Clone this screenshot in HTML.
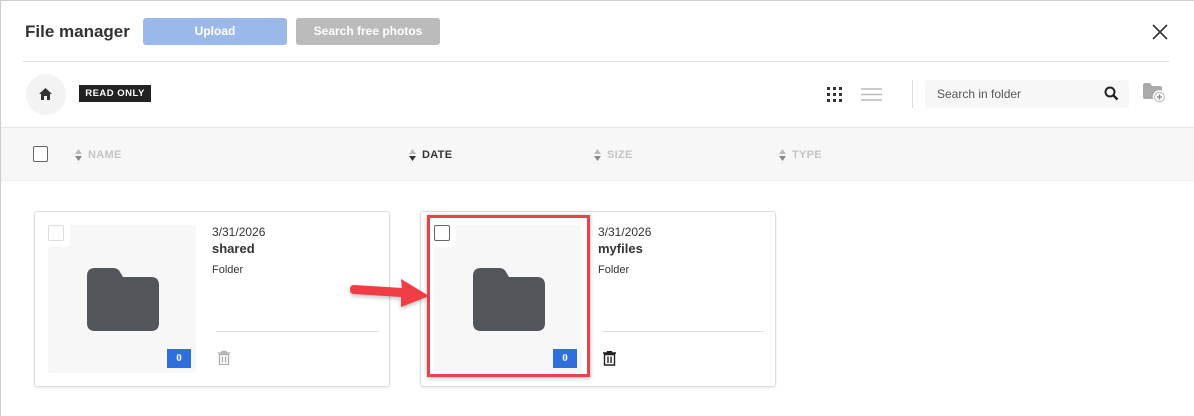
<!DOCTYPE html>
<html><head><style>
*{box-sizing:border-box;margin:0;padding:0}
body{width:1194px;height:416px;background:#fff;font-family:"Liberation Sans",sans-serif;position:relative;overflow:hidden}
.a{position:absolute}
.frame{left:0;top:0;width:1194px;height:416px;border:1px solid #ccc;border-right:none;border-bottom:none}
.btn{height:27px;top:18px;border-radius:3px;color:#fff;font-weight:bold;font-size:12px;text-align:center;line-height:27px}
.hd{font-size:11px;font-weight:bold;color:#c4c4c4;letter-spacing:.3px;top:149px}
.sort{top:148px;width:7px;height:14px}
.card{border:1px solid #ddd;border-radius:3px;background:#fff;width:356px;height:176px;top:211px;box-shadow:0 1px 2px rgba(0,0,0,.08)}
.thumb{left:13px;top:13px;width:148px;height:148px;background:#f7f7f7;border-radius:3px}
.cb{width:16px;height:16px;border:1px solid #999;border-radius:2px;background:#fff}
.badge{width:24px;height:19px;background:#2f6fdc;color:#fff;font-size:11px;font-weight:bold;text-align:center;line-height:19px;font-family:"Liberation Serif",serif}
.txt{font-size:12px;color:#333}
</style></head><body>
<div class="a frame"></div>
<div class="a" style="left:25px;top:22px;font-size:17px;font-weight:bold;color:#333">File manager</div>
<div class="a btn" style="left:143px;width:144px;background:#9ab8ea">Upload</div>
<div class="a btn" style="left:296px;width:144px;background:#bbb">Search free photos</div>
<svg class="a" style="left:1152px;top:24px" width="16" height="16"><path d="M1 1L15 15M15 1L1 15" stroke="#333" stroke-width="1.6"/></svg>
<div class="a" style="left:23px;top:61px;width:1146px;height:1px;background:#ddd"></div>
<div class="a" style="left:26px;top:74px;width:40px;height:41px;border-radius:50%;background:#f3f3f3"></div>
<svg class="a" style="left:39px;top:88px" width="13" height="12"><path d="M6.5 0L13 6H11V12H8V8H5V12H2V6H0Z" fill="#333"/></svg>
<div class="a" style="left:79px;top:85px;width:72px;height:17px;background:#222;color:#fff;font-size:9.5px;font-weight:bold;letter-spacing:.5px;text-align:center;line-height:17px">READ ONLY</div>
<svg class="a" style="left:827px;top:87px" width="18" height="16"><g fill="#333"><rect x="0" y="0" width="3" height="3"/><rect x="6" y="0" width="3" height="3"/><rect x="12" y="0" width="3" height="3"/><rect x="0" y="6" width="3" height="3"/><rect x="6" y="6" width="3" height="3"/><rect x="12" y="6" width="3" height="3"/><rect x="0" y="12" width="3" height="3"/><rect x="6" y="12" width="3" height="3"/><rect x="12" y="12" width="3" height="3"/></g></svg>
<svg class="a" style="left:861px;top:88px" width="21" height="14"><g stroke="#bbb" stroke-width="1.5"><path d="M0 1H21M0 6.5H21M0 12H21"/></g></svg>
<div class="a" style="left:912px;top:80px;width:1px;height:28px;background:#ddd"></div>
<div class="a" style="left:925px;top:80px;width:204px;height:28px;background:#f7f7f7;border-radius:3px"></div>
<div class="a" style="left:937px;top:87px;font-size:12px;color:#555">Search in folder</div>
<svg class="a" style="left:1104px;top:86px" width="15" height="15"><circle cx="6" cy="6" r="4.5" stroke="#222" stroke-width="2" fill="none"/><path d="M9.5 9.5L13.5 13.5" stroke="#222" stroke-width="2.4"/></svg>
<svg class="a" style="left:1143px;top:83px" width="25" height="22"><path d="M0 2Q0 0 2 0H7L9 3H17Q19 3 19 5V16H2Q0 16 0 14Z" fill="#aaa"/><circle cx="16.5" cy="14" r="6" fill="#aaa" stroke="#fff" stroke-width="1.5"/><circle cx="16.5" cy="14" r="4.5" fill="#f7f7f7"/><path d="M16.5 11.5V16.5M14 14H19" stroke="#888" stroke-width="1.2"/></svg>
<div class="a" style="left:1px;top:127px;width:1193px;height:54px;background:#f7f7f7;border-top:1px solid #e6e6e6;border-bottom:1px solid #eee"></div>
<div class="a cb" style="left:33px;top:146px;width:15px;height:16px;border-color:#666"></div>
<svg class="a sort" style="left:75px"><path d="M0 6L3.5 1L7 6Z" fill="#bbb"/><path d="M0 8L3.5 13L7 8Z" fill="#888"/></svg>
<div class="a hd" style="left:88px">NAME</div>
<svg class="a sort" style="left:409px"><path d="M0 6L3.5 1L7 6Z" fill="#bbb"/><path d="M0 8L3.5 13L7 8Z" fill="#333"/></svg>
<div class="a hd" style="left:422px;color:#333">DATE</div>
<svg class="a sort" style="left:594px"><path d="M0 6L3.5 1L7 6Z" fill="#bbb"/><path d="M0 8L3.5 13L7 8Z" fill="#888"/></svg>
<div class="a hd" style="left:607px">SIZE</div>
<svg class="a sort" style="left:779px"><path d="M0 6L3.5 1L7 6Z" fill="#bbb"/><path d="M0 8L3.5 13L7 8Z" fill="#888"/></svg>
<div class="a hd" style="left:792px">TYPE</div>

<div class="a card" style="left:34px">
 <div class="a thumb"></div>
 <div class="a" style="left:13px;top:13px;width:22px;height:22px;background:#fff;border-radius:0 0 4px 0"></div>
 <div class="a cb" style="left:13px;top:13px;border-color:#ddd"></div>
 <svg class="a" style="left:52px;top:56px" width="72" height="63"><path d="M0 8Q0 0 8 0H26Q31 0 33 4L36 9H64Q72 9 72 17V55Q72 63 64 63H8Q0 63 0 55Z" fill="#525559"/></svg>
 <div class="a badge" style="left:132px;top:137px">0</div>
 <div class="a txt" style="left:177px;top:13px">3/31/2026</div>
 <div class="a txt" style="left:177px;top:29px;font-weight:bold;font-size:13px">shared</div>
 <div class="a txt" style="left:177px;top:52px;font-size:11px">Folder</div>
 <div class="a" style="left:181px;top:119px;width:162px;height:1px;background:#ddd"></div>
 <svg class="a" style="left:183px;top:139px" width="12" height="14"><path d="M0 2H12M4 2V0.5H8V2M1.5 3.5H10.5V13.5H1.5Z M4.5 5.5V11.5M7.5 5.5V11.5" stroke="#aaa" stroke-width="1.3" fill="none"/></svg>
</div>

<div class="a card" style="left:420px">
 <div class="a thumb"></div>
 <div class="a" style="left:13px;top:13px;width:22px;height:22px;background:#fff;border-radius:0 0 4px 0"></div>
 <div class="a cb" style="left:13px;top:13px;border-color:#666"></div>
 <svg class="a" style="left:52px;top:56px" width="72" height="63"><path d="M0 8Q0 0 8 0H26Q31 0 33 4L36 9H64Q72 9 72 17V55Q72 63 64 63H8Q0 63 0 55Z" fill="#525559"/></svg>
 <div class="a badge" style="left:132px;top:137px">0</div>
 <div class="a txt" style="left:177px;top:13px">3/31/2026</div>
 <div class="a txt" style="left:177px;top:29px;font-weight:bold;font-size:13px">myfiles</div>
 <div class="a txt" style="left:177px;top:52px;font-size:11px">Folder</div>
 <div class="a" style="left:181px;top:119px;width:162px;height:1px;background:#ddd"></div>
 <svg class="a" style="left:182px;top:139px" width="13" height="15"><path d="M0 2H13M4.5 2V0.5H8.5V2M1.5 3.5H11.5V14H1.5Z M5 5.5V12M8 5.5V12" stroke="#222" stroke-width="1.4" fill="none"/></svg>
</div>
<div class="a" style="left:427px;top:215px;width:163px;height:162px;border:3px solid #e8424a;box-shadow:0 1px 4px rgba(0,0,0,.3)"></div>
<svg class="a" style="left:345px;top:274px" width="90" height="40"><path d="M9 11L57 14L56 5L84 22L56 33L56 23L9 20Q5 20 5 15.5Q5 11 9 11Z" fill="#f03c44" style="filter:drop-shadow(0 2px 2px rgba(0,0,0,.25))"/></svg>
</body></html>
